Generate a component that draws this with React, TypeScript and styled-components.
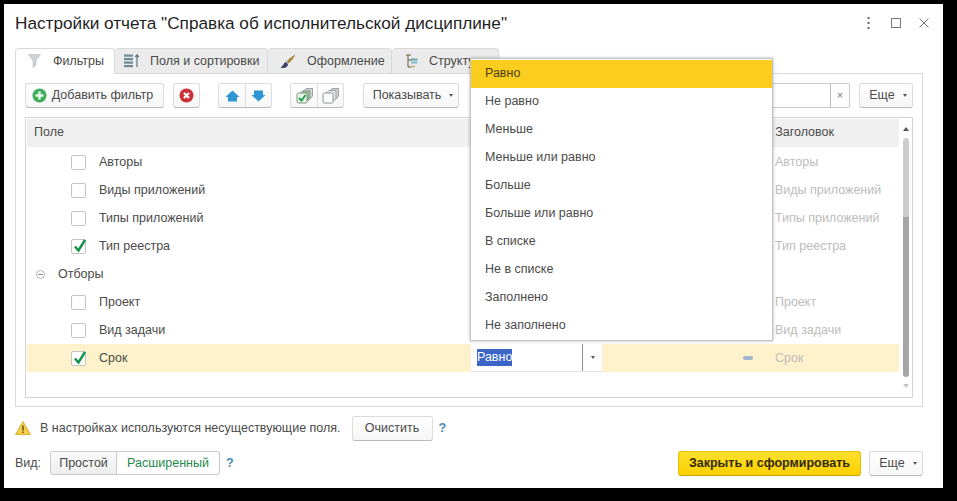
import styled, { createGlobalStyle } from 'styled-components';

const GlobalStyle = createGlobalStyle`
  html, body {
    margin: 0;
    height: 100%;
    background: #000;
    overflow: hidden;
  }
  * {
    box-sizing: border-box;
  }
`;

const Window = styled.div`
  position: relative;
  width: 939px;
  height: 484px;
  margin: 4px 0 0 4px;
  background: #fff;
  color: #4a4a4a;
  font-family: 'Liberation Sans', Arial, sans-serif;
  font-size: 12.5px;
  line-height: 17px;
  display: flex;
  flex-direction: column;
  padding: 0 20px 0 11px;
`;

const TitleBar = styled.div`
  height: 44px;
  display: flex;
  align-items: center;
  justify-content: space-between;
  padding-bottom: 6px;
`;

const Title = styled.h1`
  margin: 0;
  font-size: 17.2px;
  line-height: 22px;
  font-weight: 400;
  color: #1f1f1f;
`;

const WindowControls = styled.div`
  display: flex;
  align-items: center;
  gap: 18px;
  margin-right: -6px;
`;

const DotsButton = styled.svg`
  margin-right: 3px;
`;

const TabStrip = styled.div`
  display: flex;
  height: 26px;
  margin-bottom: -1px;
  position: relative;
  z-index: 1;
`;

const Tab = styled.div<{ $active?: boolean; $width: number; $gap: number; $pad: number }>`
  width: ${(p) => p.$width}px;
  display: flex;
  align-items: center;
  gap: ${(p) => p.$gap}px;
  padding-left: ${(p) => p.$pad}px;
  color: #4a4a4a;
  white-space: nowrap;
  background: ${(p) => (p.$active ? '#fff' : '#ebebeb')};
  border: 1px solid #d9d9d9;
  border-bottom-color: ${(p) => (p.$active ? '#fff' : '#d9d9d9')};
  border-left-width: ${(p) => (p.$active ? 1 : 0)}px;
  border-radius: 4px 4px 0 0;
`;

const Panel = styled.div`
  height: 334px;
  border: 1px solid #d9d9d9;
  padding: 9px 9px 8px;
  display: flex;
  flex-direction: column;
  gap: 9px;
`;

const Toolbar = styled.div`
  display: flex;
  height: 25px;
`;

const Button = styled.button<{ $width: number; $gap?: number }>`
  width: ${(p) => p.$width}px;
  height: 25px;
  margin-left: ${(p) => p.$gap ?? 0}px;
  padding: 0;
  display: flex;
  align-items: center;
  justify-content: center;
  gap: 5px;
  flex-shrink: 0;
  font: inherit;
  color: #4a4a4a;
  background: linear-gradient(#fff, #f6f6f6);
  border: 1px solid #dcdcdc;
  border-bottom-color: #b9b9b9;
  border-radius: 3px;
`;

const AddButton = styled(Button)`
  padding-right: 4px;
`;

const MenuButton = styled(Button)`
  padding-left: 4px;
  gap: 7px;
`;

const GroupedButton = styled(Button)<{ $last?: boolean }>`
  border-radius: ${(p) => (p.$last ? '0 3px 3px 0' : '3px 0 0 3px')};
  border-left-width: ${(p) => (p.$last ? 0 : 1)}px;
`;

const Caret = styled.span`
  width: 0;
  height: 0;
  margin-left: 1px;
  border-left: 2.5px solid transparent;
  border-right: 2.5px solid transparent;
  border-top: 3px solid #555;
`;

const SearchBox = styled.div`
  flex: 1;
  margin: 0 0 0 18px;
  display: flex;
  justify-content: flex-end;
  border: 1px solid #c9c9c9;
  border-radius: 2px;
`;

const ClearCell = styled.div`
  width: 19px;
  display: flex;
  align-items: center;
  justify-content: center;
  border-left: 1px solid #bdbdbd;
  color: #777;
  font-size: 11px;
`;

const Table = styled.div`
  flex: 1;
  display: flex;
  border: 1px solid #d4d4d4;
  padding: 1px 0 0 1px;
`;

const TableBody = styled.div`
  width: 872px;
  display: flex;
  flex-direction: column;
`;

const HeaderRow = styled.div`
  height: 28px;
  flex-shrink: 0;
  margin-bottom: 1px;
  display: flex;
  align-items: center;
  justify-content: space-between;
  background: #f0f0f0;
  padding: 0 65px 2px 7px;
`;

const Row = styled.div<{ $current?: boolean }>`
  height: 28px;
  flex-shrink: 0;
  display: grid;
  grid-template-columns: 444px 131px 141px 32px 1fr;
  align-items: center;
  background: ${(p) => (p.$current ? '#fdf2cc' : 'transparent')};
`;

const FieldCell = styled.div<{ $group?: boolean }>`
  display: flex;
  align-items: center;
  padding-left: ${(p) => (p.$group ? 9 : 44)}px;
  gap: 13px;
`;

const Checkbox = styled.span`
  width: 15px;
  height: 15px;
  position: relative;
  background: #fff;
  border: 1px solid #c4c4c4;
  border-radius: 2px;
  flex-shrink: 0;
`;

const CheckMark = styled.svg`
  position: absolute;
  left: 0;
  top: -3px;
`;

const TitleCell = styled.div`
  grid-column: 5;
  color: #bcbcbc;
`;

const EditorCell = styled.div`
  grid-column: 2;
  height: 28px;
  display: flex;
  align-items: center;
  background: #fff;
  padding-left: 6px;
  border-bottom: 1px solid #e0e0e0;
`;

const EditorInput = styled.div`
  flex: 1;
  height: 100%;
  display: flex;
  align-items: center;
  border-right: 1px solid #8c8c8c;
`;

const SelectedText = styled.span`
  background: #3b66c8;
  color: #fff;
`;

const EditorArrow = styled.div`
  width: 19px;
  display: flex;
  justify-content: center;
`;

const MinusCell = styled.div`
  grid-column: 4;
  width: 10px;
  height: 4px;
  background: #9fb6cc;
  border-radius: 2px;
`;

const ScrollTrack = styled.div`
  flex: 1;
  display: flex;
  flex-direction: column;
  align-items: center;
  padding-top: 8px;
  padding-left: 1px;
`;

const ScrollArrow = styled.span<{ $down?: boolean }>`
  width: 0;
  height: 0;
  border-left: 3px solid transparent;
  border-right: 3px solid transparent;
  ${(p) => (p.$down ? 'border-top: 4px solid #c4c4c4; margin-top: 7px;' : 'border-bottom: 4px solid #555; margin-bottom: 7px;')}
`;

const ScrollThumb = styled.div<{ $height: number; $dark?: boolean }>`
  width: 6px;
  height: ${(p) => p.$height}px;
  background: ${(p) => (p.$dark ? '#a6a6a6' : '#cdcdcd')};
  border-radius: ${(p) => (p.$dark ? '0 0 3px 3px' : '3px 3px 0 0')};
`;

const Popup = styled.div`
  position: absolute;
  left: 466px;
  top: 54px;
  width: 303px;
  height: 283px;
  padding-top: 1px;
  background: #fff;
  border: 1px solid #c4c4c4;
  box-shadow: 0 0 3px rgba(0, 0, 0, 0.3);
  z-index: 2;
`;

const PopupItem = styled.div<{ $active?: boolean }>`
  height: 28px;
  display: flex;
  align-items: center;
  padding: 0 0 2px 14px;
  background: ${(p) => (p.$active ? '#fbcd1f' : 'transparent')};
  color: ${(p) => (p.$active ? '#4a3d10' : '#4a4a4a')};
`;

const WarningRow = styled.div`
  height: 26px;
  margin-top: 8px;
  display: flex;
  align-items: center;
`;

const WarningText = styled.span`
  margin-left: 9px;
`;

const Help = styled.span`
  margin-left: 6px;
  color: #4a8ab5;
  font-weight: 700;
`;

const Footer = styled.div`
  height: 26px;
  margin-top: 9px;
  display: flex;
  align-items: center;
`;

const ViewLabel = styled.span`
  width: 35px;
`;

const Segment = styled.button<{ $active?: boolean; $width: number }>`
  width: ${(p) => p.$width}px;
  height: 24px;
  padding: 0;
  font: inherit;
  color: ${(p) => (p.$active ? '#1f8a4c' : '#4a4a4a')};
  background: ${(p) => (p.$active ? '#fff' : 'linear-gradient(#fafafa, #eeeeee)')};
  border: 1px solid #c9c9c9;
  border-left-width: ${(p) => (p.$active ? 0 : 1)}px;
  border-radius: ${(p) => (p.$active ? '0 3px 3px 0' : '3px 0 0 3px')};
`;

const PrimaryButton = styled.button`
  width: 183px;
  height: 25px;
  margin-left: auto;
  padding: 0;
  font: inherit;
  font-weight: 700;
  color: #332a00;
  background: linear-gradient(#ffe02e, #fbd000);
  border: 1px solid #e5bf00;
  border-bottom-color: #c4a300;
  border-radius: 3px;
`;

const Bold3Dots = () => (
  <DotsButton width="3" height="13" viewBox="0 0 3 13">
    <g fill="#666">
      <rect x="0.5" y="0" width="2" height="2" />
      <rect x="0.5" y="5" width="2" height="2" />
      <rect x="0.5" y="10" width="2" height="2" />
    </g>
  </DotsButton>
);

const MaximizeIcon = () => (
  <svg width="10" height="10" viewBox="0 0 10 10">
    <rect x="0.5" y="0.5" width="9" height="9" fill="none" stroke="#777" />
  </svg>
);

const CloseIcon = () => (
  <svg width="10" height="10" viewBox="0 0 10 10">
    <path d="M0.5 0.5 9.5 9.5 M9.5 0.5 0.5 9.5" stroke="#777" />
  </svg>
);

const FilterIcon = () => (
  <svg width="13" height="14" viewBox="0 0 13 14">
    <path d="M0.5 0.5H12.5L8 6.5V11L5 13.5V6.5Z" fill="#cdd2d4" stroke="#b4babd" strokeWidth="0.6" />
  </svg>
);

const SortFieldsIcon = () => (
  <svg width="16" height="14" viewBox="0 0 16 14">
    <g fill="#6f8a96">
      <rect x="0" y="0.5" width="9" height="2.2" />
      <rect x="0" y="4" width="9" height="2.2" />
      <rect x="0" y="7.5" width="9" height="2.2" />
      <rect x="0" y="11" width="9" height="2.2" />
    </g>
    <path d="M13 1V13 M11.2 3 13 .8 14.8 3" stroke="#5f7480" fill="none" strokeWidth="1.2" />
  </svg>
);

const BrushIcon = () => (
  <svg width="16" height="15" viewBox="0 0 16 15">
    <path d="M15.5 0.5C12 2 8.5 5 6.5 7.5L8.5 9.5C11 7.5 14 4 15.5 0.5Z" fill="#a8873f" />
    <path d="M6 8C3.5 8.5 3.5 12 0.5 13.5C4 15 8 13.5 8 10Z" fill="#43416e" />
  </svg>
);

const StructureIcon = () => (
  <svg width="13" height="15" viewBox="0 0 13 15">
    <path d="M1 1H6 M3 1V13H6 M3 6H7" stroke="#6b5b3a" fill="none" />
    <rect x="6" y="4.5" width="6.5" height="2" fill="#5fa3b5" />
    <rect x="6" y="7.5" width="6.5" height="2" fill="#7dbccb" />
    <rect x="6" y="11.5" width="4" height="2" fill="#c9b98a" />
  </svg>
);

const AddIcon = () => (
  <svg width="15" height="15" viewBox="0 0 15 15">
    <circle cx="7.5" cy="7.5" r="7" fill="#3fae5a" />
    <path d="M7.5 3.5V11.5 M3.5 7.5H11.5" stroke="#e9f7ec" strokeWidth="2.4" />
  </svg>
);

const RemoveIcon = () => (
  <svg width="15" height="15" viewBox="0 0 15 15">
    <circle cx="7.5" cy="7.5" r="7" fill="#cc3139" />
    <path d="M5 5 10 10 M10 5 5 10" stroke="#fff" strokeWidth="2.2" />
  </svg>
);

const ArrowIcon = ({ down }: { down?: boolean }) => (
  <svg width="15" height="12" viewBox="0 0 15 12">
    <path
      d={down ? 'M3 0.5H12V5H14.5L7.5 11.5 0.5 5H3Z' : 'M7.5 0.5 14.5 7H12V11.5H3V7H0.5Z'}
      fill="#2f96d6"
      strokeLinejoin="round"
    />
  </svg>
);

const StackIcon = ({ checked }: { checked?: boolean }) => (
  <svg width="17" height="16" viewBox="0 0 17 16">
    <path d="M8 2.5 10 0.5H16.5V8L14.5 10.5H8Z" fill="#d4d7d8" stroke="#9aa0a3" />
    <path d="M4.5 5 7 2.5H14V11L11.5 13H4.5Z" fill={checked ? '#8fb58f' : '#e4e6e7'} stroke="#9aa0a3" />
    <rect
      x="1"
      y="5"
      width="10"
      height="10"
      rx="1.5"
      fill={checked ? '#e9f2e6' : '#fff'}
      stroke={checked ? '#7d9a7d' : '#8b9194'}
    />
    {checked && <path d="M3 10 5.5 12.5 9.5 7" fill="none" stroke="#16a34a" strokeWidth="1.8" />}
  </svg>
);

const CollapseIcon = () => (
  <svg width="9" height="9" viewBox="0 0 9 9">
    <circle cx="4.5" cy="4.5" r="4" fill="none" stroke="#b5b5b5" />
    <path d="M2.2 4.5H6.8" stroke="#888" />
  </svg>
);

const WarningIcon = () => (
  <svg width="16" height="14" viewBox="0 0 16 14">
    <path d="M8 0.5 15.5 13.5H0.5Z" fill="#f3cf4d" stroke="#d9b23a" strokeLinejoin="round" />
    <path d="M8 4.5V9.5 M8 10.5V12" stroke="#6b5410" strokeWidth="1.5" />
  </svg>
);

const COMPARISONS = [
  'Равно',
  'Не равно',
  'Меньше',
  'Меньше или равно',
  'Больше',
  'Больше или равно',
  'В списке',
  'Не в списке',
  'Заполнено',
  'Не заполнено',
];

const Check = () => (
  <CheckMark width="16" height="17" viewBox="0 0 16 17">
    <path d="M3 9.5 6.5 13.5 13 3" fill="none" stroke="#12924a" strokeWidth="2.4" />
  </CheckMark>
);

const FieldRow = ({ name, checked }: { name: string; checked?: boolean }) => (
  <Row>
    <FieldCell>
      <Checkbox>{checked && <Check />}</Checkbox>
      {name}
    </FieldCell>
    <TitleCell>{name}</TitleCell>
  </Row>
);

export default function App() {
  return (
    <>
      <GlobalStyle />
      <Window>
        <TitleBar>
          <Title>Настройки отчета "Справка об исполнительской дисциплине"</Title>
          <WindowControls>
            <Bold3Dots />
            <MaximizeIcon />
            <CloseIcon />
          </WindowControls>
        </TitleBar>

        <TabStrip>
          <Tab $active $width={100} $gap={12} $pad={12}>
            <FilterIcon />
            Фильтры
          </Tab>
          <Tab $width={153} $gap={10} $pad={9}>
            <SortFieldsIcon />
            Поля и сортировки
          </Tab>
          <Tab $width={124} $gap={11} $pad={12}>
            <BrushIcon />
            Оформление
          </Tab>
          <Tab $width={107} $gap={11} $pad={13}>
            <StructureIcon />
            Структура
          </Tab>
        </TabStrip>

        <Panel>
          <Toolbar>
            <AddButton $width={139}>
              <AddIcon />
              Добавить фильтр
            </AddButton>
            <Button $width={27} $gap={9}>
              <RemoveIcon />
            </Button>
            <GroupedButton $width={28} $gap={18}>
              <ArrowIcon />
            </GroupedButton>
            <GroupedButton $width={26} $last>
              <ArrowIcon down />
            </GroupedButton>
            <GroupedButton $width={28} $gap={18}>
              <StackIcon checked />
            </GroupedButton>
            <GroupedButton $width={26} $last>
              <StackIcon />
            </GroupedButton>
            <MenuButton $width={96} $gap={19}>
              Показывать
              <Caret />
            </MenuButton>
            <SearchBox>
              <ClearCell>×</ClearCell>
            </SearchBox>
            <MenuButton $width={54} $gap={9}>
              Еще
              <Caret />
            </MenuButton>
          </Toolbar>

          <Table>
            <TableBody>
              <HeaderRow>
                <span>Поле</span>
                <span>Заголовок</span>
              </HeaderRow>
              <FieldRow name="Авторы" />
              <FieldRow name="Виды приложений" />
              <FieldRow name="Типы приложений" />
              <FieldRow name="Тип реестра" checked />
              <Row>
                <FieldCell $group>
                  <CollapseIcon />
                  Отборы
                </FieldCell>
              </Row>
              <FieldRow name="Проект" />
              <FieldRow name="Вид задачи" />
              <Row $current>
                <FieldCell>
                  <Checkbox>
                    <Check />
                  </Checkbox>
                  Срок
                </FieldCell>
                <EditorCell>
                  <EditorInput>
                    <SelectedText>Равно</SelectedText>
                  </EditorInput>
                  <EditorArrow>
                    <Caret />
                  </EditorArrow>
                </EditorCell>
                <MinusCell />
                <TitleCell>Срок</TitleCell>
              </Row>
            </TableBody>
            <ScrollTrack>
              <ScrollArrow />
              <ScrollThumb $height={79} />
              <ScrollThumb $height={160} $dark />
              <ScrollArrow $down />
            </ScrollTrack>
          </Table>
        </Panel>

        <WarningRow>
          <WarningIcon />
          <WarningText>В настройках используются несуществующие поля.</WarningText>
          <Button $width={81} $gap={11}>
            Очистить
          </Button>
          <Help>?</Help>
        </WarningRow>

        <Footer>
          <ViewLabel>Вид:</ViewLabel>
          <Segment $width={67}>Простой</Segment>
          <Segment $active $width={103}>
            Расширенный
          </Segment>
          <Help>?</Help>
          <PrimaryButton>Закрыть и сформировать</PrimaryButton>
          <MenuButton $width={54} $gap={8}>
            Еще
            <Caret />
          </MenuButton>
        </Footer>

        <Popup>
          {COMPARISONS.map((item, i) => (
            <PopupItem key={item} $active={i === 0}>
              {item}
            </PopupItem>
          ))}
        </Popup>
      </Window>
    </>
  );
}
